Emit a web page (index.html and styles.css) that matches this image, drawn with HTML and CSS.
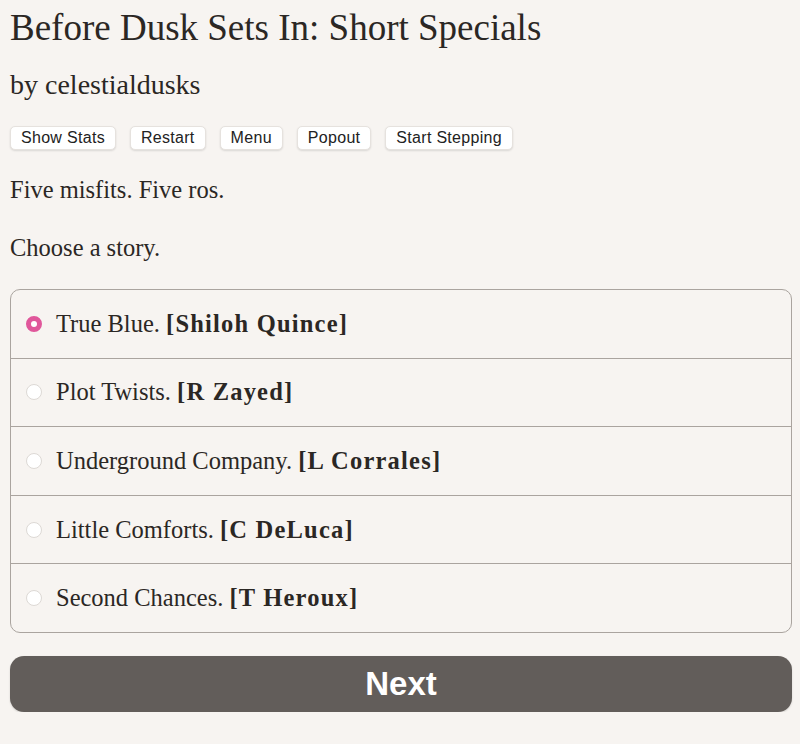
FILE: index.html
```html
<!DOCTYPE html>
<html lang="en">
<head>
<meta charset="utf-8">
<title>Before Dusk Sets In: Short Specials</title>
<link rel="stylesheet" href="styles.css">
</head>
<body>
<div class="page">
  <h1 class="title">Before Dusk Sets In: Short Specials</h1>
  <h2 class="author">by celestialdusks</h2>
  <div class="toolbar">
    <button class="tool">Show Stats</button>
    <button class="tool">Restart</button>
    <button class="tool">Menu</button>
    <button class="tool">Popout</button>
    <button class="tool">Start Stepping</button>
  </div>
  <p class="text">Five misfits. Five ros.</p>
  <p class="text">Choose a story.</p>
  <form class="choices">
    <label class="choice"><span class="radio checked"></span><span>True Blue. <b>[Shiloh Quince]</b></span></label>
    <label class="choice"><span class="radio"></span><span>Plot Twists. <b>[R Zayed]</b></span></label>
    <label class="choice"><span class="radio"></span><span>Underground Company. <b>[L Corrales]</b></span></label>
    <label class="choice"><span class="radio"></span><span>Little Comforts. <b>[C DeLuca]</b></span></label>
    <label class="choice"><span class="radio"></span><span>Second Chances. <b>[T Heroux]</b></span></label>
  </form>
  <button class="next">Next</button>
</div>
</body>
</html>
```

FILE: styles.css
```css
html, body {
  margin: 0;
  padding: 0;
  background: #f7f4f1;
}
body {
  font-family: "Liberation Serif", "Times New Roman", serif;
  color: #2b2724;
}
.page {
  padding: 0 8px 0 10px;
}
.title {
  margin: 0;
  padding-top: 6px;
  font-size: 37px;
  font-weight: normal;
  line-height: 44px;
}
.author {
  margin: 19px 0 0;
  font-size: 28px;
  font-weight: normal;
  line-height: 32px;
}
.toolbar {
  display: flex;
  gap: 14px;
  margin-top: 25px;
}
.tool {
  font-family: "Liberation Sans", Arial, sans-serif;
  font-size: 16px;
  letter-spacing: 0.3px;
  color: #222;
  background: #fff;
  border: 1px solid #e6e2de;
  border-radius: 5px;
  box-shadow: 0 1px 2px rgba(0,0,0,0.12);
  height: 24px;
  padding: 0 10px;
  line-height: 22px;
}
.text {
  margin: 23px 0 0;
  font-size: 24.5px;
  line-height: 34px;
}
.text + .text {
  margin-top: 24px;
}
.choices {
  margin-top: 24px;
  border: 1px solid #aaa49f;
  border-radius: 10px;
  overflow: hidden;
  display: flex;
  flex-direction: column;
}
.choice {
  display: flex;
  align-items: center;
  gap: 14px;
  height: 68.6px;
  padding-left: 15px;
  font-size: 24.5px;
  border-top: 1px solid #aaa49f;
  box-sizing: border-box;
}
.choice:first-child {
  border-top: none;
  height: 67.6px;
}
.choice b {
  font-weight: bold;
  letter-spacing: 1.2px;
}
.radio {
  width: 16px;
  height: 16px;
  box-sizing: border-box;
  border-radius: 50%;
  background: #fff;
  border: 1px solid #ddd9d5;
  flex: none;
}
.radio.checked {
  background: #fff;
  border: 5px solid #e0579b;
}
.next {
  display: block;
  width: 100%;
  margin-top: 23px;
  height: 56px;
  border: none;
  border-radius: 14px;
  background: #625d5a;
  color: #fff;
  font-family: "Liberation Sans", Arial, sans-serif;
  font-weight: bold;
  font-size: 33px;
  box-shadow: 0 1px 2px rgba(0,0,0,0.15);
}
```
